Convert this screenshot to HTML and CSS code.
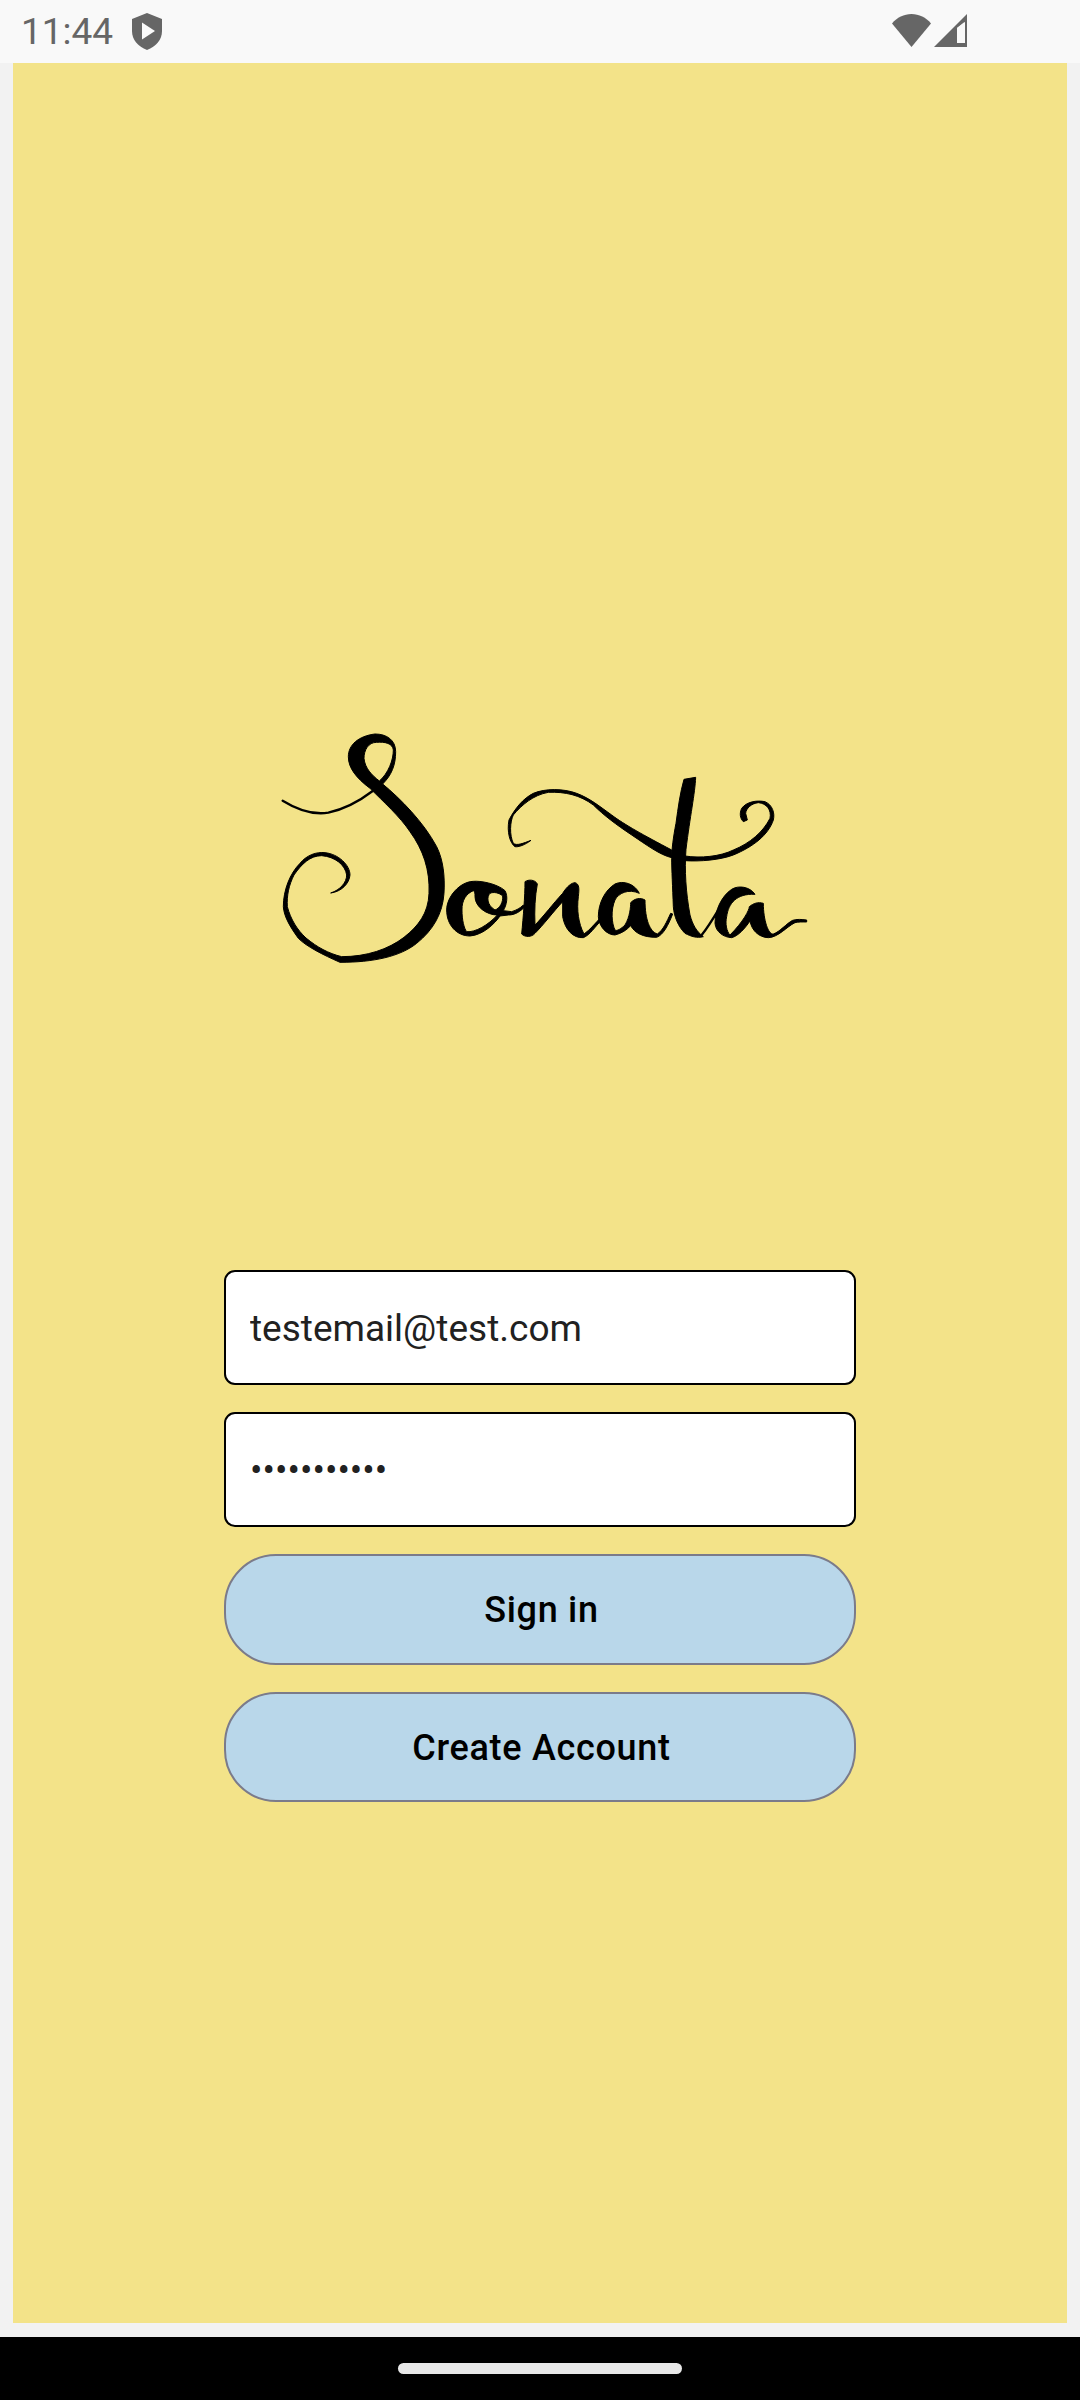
FILE: index.html
```html
<!DOCTYPE html>
<html lang="en">
<head>
<meta charset="utf-8">
<title>Sonata</title>
<link rel="stylesheet" href="styles.css">
</head>
<body>
<header class="status-bar">
  <span class="clock">11:44</span>
  <svg class="shield" viewBox="0 0 30 37" aria-hidden="true">
    <path class="icon-fill" d="M15 0 L30 6 V18 C30 27 24 33.500 15 37 C6 33.500 0 27 0 18 V6 Z"/>
    <path class="icon-cut" d="M10 9.500 L23 18 L10 26.500 Z"/>
  </svg>
  <span class="status-spacer"></span>
  <svg class="wifi" viewBox="0 0 39 33" aria-hidden="true">
    <path class="icon-fill" d="M19.500 33 L0 9.500 C5 3.500 12 0 19.500 0 C27 0 34 3.500 39 9.500 Z"/>
  </svg>
  <svg class="signal" viewBox="0 0 33 33" aria-hidden="true">
    <path class="icon-fill" fill-rule="evenodd" d="M33 0 V33 H0 Z M31 8 L23 14 V29 H31 Z"/>
    <path class="icon-cut" d="M23 14 L30.500 8 V29 H23 Z"/>
  </svg>
</header>

<main class="screen">
  <svg class="logo" viewBox="265 720 550 250" role="img" aria-label="Sonata">
    <g transform="translate(260 710) scale(.33333)">
      <path class="ink" fill-rule="evenodd" d="M345,72 C380,72 407,90 407,125 C407,165 395,195 368,222 C420,265 490,335 530,410 C550,450 555,500 552,550 C548,610 520,660 470,700 C420,740 340,757 240,757 C190,735 140,710 115,685 C90,650 72,620 70,590 C70,540 90,490 120,460 C140,435 170,425 195,428 C235,432 270,465 270,495 C268,520 245,545 212,549 C240,540 260,518 260,495 C256,465 225,440 185,437 C150,437 125,462 102,495 C87,525 80,555 82,590 C92,628 112,660 138,684 C172,712 205,730 245,740 C320,740 385,718 432,682 C475,648 505,610 507,550 C510,480 490,420 450,365 C420,320 370,275 330,235 C290,205 265,175 265,140 C265,105 295,78 345,72 Z M350,97 C325,97 312,120 312,145 C315,175 335,195 358,213 C385,190 400,150 400,120 C398,100 375,95 350,97 Z"/>
      <path class="ink-line" d="M68,272 C110,298 160,315 205,308 C250,298 300,272 338,243"/>
    </g>
    <g transform="translate(440 860) scale(.33333)">
      <path class="ink" fill-rule="evenodd" d="M100,64 C120,62 170,70 195,92 C205,110 200,135 190,152 L215,155 C230,150 240,145 250,135 L255,140 C240,155 225,165 205,165 L180,168 C165,190 130,225 90,228 C50,228 20,195 20,150 C20,110 60,65 100,64 Z M100,92 C80,100 65,120 66,150 C66,180 72,205 80,215 C105,218 145,195 172,165 C140,165 105,140 105,110 C105,100 105,95 100,92 Z M150,100 C140,110 140,135 165,150 C180,145 190,125 188,108 C178,98 160,95 150,100 Z"/>
      <path class="ink" d="M255,65 C265,58 285,58 292,72 C285,110 283,150 285,195 C310,170 340,130 368,100 C380,80 395,68 405,68 C418,72 418,85 415,110 C410,150 415,190 432,222 C450,210 470,185 480,175 L485,180 C465,200 450,225 430,233 C400,235 375,210 368,170 L368,125 C340,155 310,195 285,220 C275,232 255,232 245,222 C250,170 255,110 255,65 Z"/>
    </g>
    <g transform="translate(500 760) scale(.33333)">
      <path class="ink" d="M418,400 C405,372 370,360 345,372 C315,390 295,430 295,470 C297,500 320,525 345,525 C365,520 380,510 392,497 C405,520 430,532 470,532 C490,525 505,495 518,462 L512,460 C500,485 490,510 472,522 C450,515 435,480 435,420 C420,412 405,415 392,428 C392,440 390,470 375,495 C365,505 350,515 345,510 C335,490 332,450 345,420 C355,400 385,385 418,400 Z"/>
      <path class="ink" d="M552,58 L587,52 C585,100 570,170 558,268 C553,330 558,400 570,465 C578,495 590,515 610,530 C590,535 575,530 555,520 C535,500 522,470 520,440 C518,380 515,330 515,295 C515,270 520,230 528,190 C535,140 540,100 552,58 Z"/>
      <path class="ink" d="M93,241 C75,255 55,262 45,260 C30,250 20,215 27,180 C45,145 70,115 100,100 C135,85 190,85 230,100 C270,115 300,140 335,165 C375,195 430,225 515,270 L515,293 C480,285 440,255 395,225 C350,195 310,165 280,135 C240,105 195,95 145,97 C100,105 65,135 40,165 C30,185 28,225 40,250 C50,258 70,250 93,241 Z"/>
      <path class="ink" d="M555,288 C600,295 660,290 700,270 C750,250 790,215 810,175 C815,150 800,130 775,128 C755,130 738,145 737,160 L742,180 L730,185 C720,175 718,160 725,145 C740,125 770,120 795,125 C818,135 825,160 820,180 C805,225 760,260 700,285 C660,300 600,305 555,302 Z"/>
    </g>
    <g transform="translate(630 860) scale(.33333)">
      <path class="ink-line" d="M215,225 C235,200 250,175 268,145"/>
      <path class="ink" d="M375,103 C360,80 325,75 305,88 C275,108 255,150 255,190 C257,215 280,232 305,233 C325,228 345,205 360,183 C365,210 385,232 415,233 C445,232 470,200 495,188 C505,185 520,186 530,186 L530,180 C515,178 500,177 488,181 C470,190 450,215 430,222 C415,225 400,180 400,130 C385,125 370,130 358,140 C358,150 340,185 300,225 C290,215 285,190 290,170 C295,130 320,100 375,103 Z"/>
    </g>
  </svg>

  <form class="login">
    <input class="field" type="email" value="testemail@test.com" aria-label="Email">
    <input class="field" type="password" value="testpasswor" aria-label="Password">
    <button class="action" type="button">Sign in</button>
    <button class="action" type="button">Create Account</button>
  </form>
</main>

<footer class="nav-bar">
  <span class="home-handle"></span>
</footer>
</body>
</html>
```
FILE: styles.css
```css
* { box-sizing: border-box; }

html, body {
  margin: 0;
  width: 1080px;
  height: 2400px;
  overflow: hidden;
}

body {
  display: flex;
  flex-direction: column;
  background: #f2f2f2;
  font-family: Roboto, "Liberation Sans", sans-serif;
}

.status-bar {
  display: flex;
  align-items: center;
  height: 63px;
  padding: 0 113px 0 21px;
  background: #f9f9f9;
}

.clock {
  font-size: 37px;
  line-height: 63px;
  color: #666666;
}

.shield {
  width: 30px;
  height: 37px;
  margin-left: 19px;
}

.status-spacer { flex: 1; }

.wifi { width: 39px; height: 33px; margin-top: -3px; }
.signal { width: 33px; height: 33px; margin-left: 3px; margin-top: -3px; }

.icon-fill { fill: #666666; }
.icon-cut { fill: #f9f9f9; }

.screen {
  display: flex;
  flex-direction: column;
  align-items: center;
  height: 2260px;
  margin: 0 13px;
  background: #f3e389;
}

.logo {
  display: block;
  width: 550px;
  height: 250px;
  margin-top: 657px;
}

.ink { fill: #000000; stroke: #000000; stroke-width: 3; stroke-linejoin: round; }
.ink-line { fill: none; stroke: #000000; stroke-width: 7; stroke-linecap: round; }

.login {
  display: flex;
  flex-direction: column;
  gap: 27px;
  width: 632px;
  margin-top: 300px;
}

.field {
  display: block;
  width: 100%;
  height: 115px;
  padding: 2px 24px 0;
  border: 2px solid #000000;
  border-radius: 11px;
  outline: none;
  background: #ffffff;
  font-family: inherit;
  font-size: 37px;
  color: #212121;
}

.action {
  display: block;
  width: 100%;
  height: 110.500px;
  padding: 2px 0 0 3px;
  border: 2px solid #7b7b8a;
  border-radius: 52px;
  background: #b9d7ea;
  font-family: inherit;
  font-size: 36px;
  font-weight: 500;
  letter-spacing: 0.7px;
  color: #000000;
}

.nav-bar {
  display: flex;
  justify-content: center;
  align-items: flex-start;
  height: 63px;
  margin-top: 14px;
  padding-top: 26px;
  background: #000000;
}

.home-handle {
  display: block;
  width: 284px;
  height: 11px;
  border-radius: 6px;
  background: #e8e8e8;
}
```
